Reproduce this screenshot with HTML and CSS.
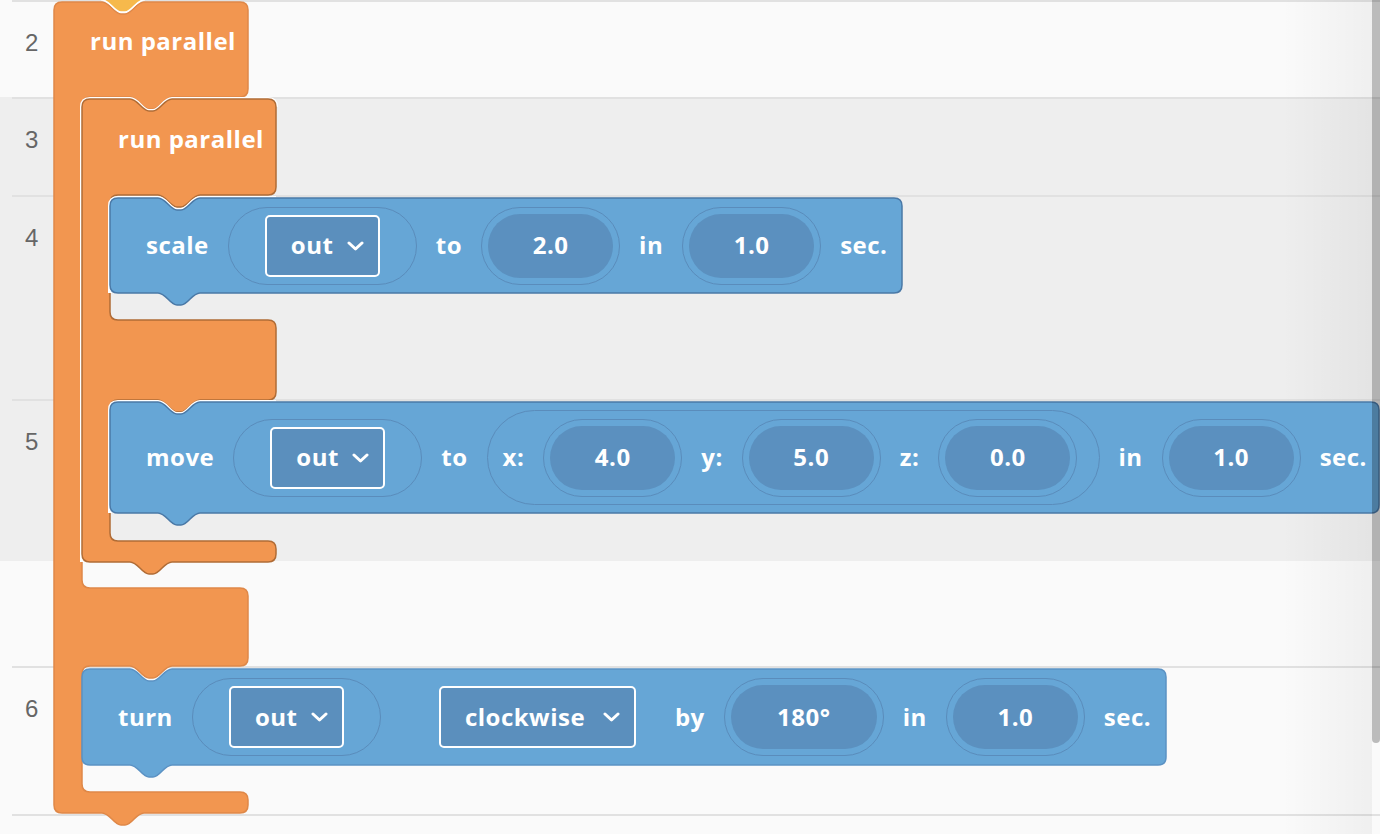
FILE: index.html
```html
<!DOCTYPE html>
<html lang="en">
<head>
    <meta charset="UTF-8" />
    <meta name="viewport" content="width=device-width, initial-scale=1.0" />
    <title>Blocks</title>
    <link rel="stylesheet" href="styles.css">
</head>

<body>
<div class="editor">
    <div class="rows">
        <div class="row row-2"><div class="row-in"><span class="ln">2</span></div></div>
        <div class="row row-3 sel"><div class="row-in"><span class="ln">3</span></div></div>
        <div class="row row-4 sel"><div class="row-in"><span class="ln">4</span></div></div>
        <div class="row row-5 sel-part"><div class="row-in"><span class="ln">5</span></div></div>
        <div class="row row-6"><div class="row-in"><span class="ln">6</span></div></div>
        <div class="row row-7"><div class="row-in"></div></div>
    </div>

    <div class="shade"></div>

    <div class="canvas">
        <!-- block shapes -->
        <svg class="shapes" width="1380" height="834" viewBox="0 0 1380 834">
            <path class="c-outer" d="M54,10 Q54,2 62,2 L102,2 C110,2 114,14 121,14 L125,14 C132,14 136,2 144,2 L240,2 Q248,2 248,10 L248,89 Q248,97 240,97 L172,97 C164,97 160,109 153,109 L149,109 C142,109 138,97 130,97 L90,97 Q82,97 82,105 L82,580 Q82,588 90,588 L240,588 Q248,588 248,596 L248,658 Q248,666 240,666 L172,666 C164,666 160,678 153,678 L149,678 C142,678 138,666 130,666 L90,666 Q82,666 82,674 L82,784 Q82,792 90,792 L240,792 Q248,792 248,800 L248,805 Q248,813 240,813 L144,813 C136,813 132,825 125,825 L121,825 C114,825 110,813 102,813 L62,813 Q54,813 54,805 Z"/>
            <path class="tab-yellow" d="M102,-4 H144 V0 C136,0 132,12 125,12 H121 C114,12 110,0 102,0 Z"/>

            <path class="hl" d="M82,562 L82,107 Q82,99 90,99 L130,99 C138,99 142,111 149,111 L153,111 C160,111 164,99 172,99 L268,99 Q276,99 276,107"/>
            <path class="c-inner" d="M82,107 Q82,99 90,99 L130,99 C138,99 142,111 149,111 L153,111 C160,111 164,99 172,99 L268,99 Q276,99 276,107 L276,187 Q276,195 268,195 L200,195 C192,195 188,207 181,207 L177,207 C170,207 166,195 158,195 L118,195 Q110,195 110,203 L110,312 Q110,320 118,320 L268,320 Q276,320 276,328 L276,392 Q276,400 268,400 L200,400 C192,400 188,412 181,412 L177,412 C170,412 166,400 158,400 L118,400 Q110,400 110,408 L110,533 Q110,541 118,541 L268,541 Q276,541 276,549 L276,554 Q276,562 268,562 L172,562 C164,562 160,574 153,574 L149,574 C142,574 138,562 130,562 L90,562 Q82,562 82,554 Z"/>

            <path class="hl" d="M110,293 L110,206 Q110,198 118,198 L158,198 C166,198 170,210 177,210 L181,210 C188,210 192,198 200,198 L276,198"/>
            <path class="b-sel" d="M110,206 Q110,198 118,198 L158,198 C166,198 170,210 177,210 L181,210 C188,210 192,198 200,198 L894,198 Q902,198 902,206 L902,285 Q902,293 894,293 L200,293 C192,293 188,305 181,305 L177,305 C170,305 166,293 158,293 L118,293 Q110,293 110,285 Z"/>

            <path class="hl" d="M110,513 L110,410 Q110,402 118,402 L158,402 C166,402 170,414 177,414 L181,414 C188,414 192,402 200,402 L276,402"/>
            <path class="b-sel" d="M110,410 Q110,402 118,402 L158,402 C166,402 170,414 177,414 L181,414 C188,414 192,402 200,402 L1371,402 Q1379,402 1379,410 L1379,505 Q1379,513 1371,513 L200,513 C192,513 188,525 181,525 L177,525 C170,525 166,513 158,513 L118,513 Q110,513 110,505 Z"/>

            <path class="b-plain" d="M82,677 Q82,669 90,669 L130,669 C138,669 142,681 149,681 L153,681 C160,681 164,669 172,669 L1158,669 Q1166,669 1166,677 L1166,757 Q1166,765 1158,765 L172,765 C164,765 160,777 153,777 L149,777 C142,777 138,765 130,765 L90,765 Q82,765 82,757 Z"/>
        </svg>

        <div class="blk outer-head"><span class="lbl">run parallel</span></div>
        <div class="blk inner-head"><span class="lbl">run parallel</span></div>

        <div class="blk scale-blk">
            <span class="lbl">scale</span>
            <div class="ring">
                <div class="dd"><span>out</span><svg class="chev" width="17" height="10" viewBox="0 0 17 10"><polyline points="2,2 8.5,8 15,2"/></svg></div>
            </div>
            <span class="lbl">to</span>
            <div class="num"><span class="val">2.0</span></div>
            <span class="lbl">in</span>
            <div class="num"><span class="val">1.0</span></div>
            <span class="lbl">sec.</span>
        </div>

        <div class="blk move-blk">
            <span class="lbl">move</span>
            <div class="ring">
                <div class="dd"><span>out</span><svg class="chev" width="17" height="10" viewBox="0 0 17 10"><polyline points="2,2 8.5,8 15,2"/></svg></div>
            </div>
            <span class="lbl">to</span>
            <div class="vec">
                <span class="lbl">x:</span>
                <div class="num"><span class="val">4.0</span></div>
                <span class="lbl">y:</span>
                <div class="num"><span class="val">5.0</span></div>
                <span class="lbl">z:</span>
                <div class="num"><span class="val">0.0</span></div>
            </div>
            <span class="lbl">in</span>
            <div class="num"><span class="val">1.0</span></div>
            <span class="lbl">sec.</span>
        </div>

        <div class="blk turn-blk">
            <span class="lbl">turn</span>
            <div class="ring">
                <div class="dd"><span>out</span><svg class="chev" width="17" height="10" viewBox="0 0 17 10"><polyline points="2,2 8.5,8 15,2"/></svg></div>
            </div>
            <div class="dd dd-wide"><span>clockwise</span><svg class="chev" width="17" height="10" viewBox="0 0 17 10"><polyline points="2,2 8.5,8 15,2"/></svg></div>
            <span class="lbl by">by</span>
            <div class="num num-wide"><span class="val">180°</span></div>
            <span class="lbl">in</span>
            <div class="num"><span class="val">1.0</span></div>
            <span class="lbl">sec.</span>
        </div>
    </div>

    <div class="scrollbar"></div>
</div>
</body>
</html>
```

FILE: styles.css
```css
body {
    margin: 0;
    background: #fafafa;
}
.editor {
    position: relative;
    width: 1380px;
    height: 834px;
    overflow: hidden;
    background: #fafafa;
}

/* line rows */
.row {
    background: #fafafa;
}
.row.sel {
    background: #eeeeee;
}
.row.sel-part {
    background: linear-gradient(#eeeeee 0 162px, #fafafa 162px);
}
.row-in {
    margin-left: 12px;
    height: 100%;
    box-sizing: border-box;
    border-top: 2px solid #e1e1e1;
    padding: 29px 0 0 13px;
}
.row-2 { height: 97px; }
.row-3 { height: 98px; }
.row-4 { height: 204px; }
.row-5 { height: 267px; }
.row-6 { height: 148px; }
.row-7 { height: 40px; }
.ln {
    display: block;
    font-family: "Liberation Sans", Arial, sans-serif;
    font-size: 24px;
    line-height: 24px;
    color: #666;
}

.shade {
    position: absolute;
    top: 0;
    right: 8px;
    width: 90px;
    height: 100%;
    background: linear-gradient(to right, rgba(0, 0, 0, 0), rgba(0, 0, 0, 0.045));
}

/* blocks */
.canvas {
    position: absolute;
    top: 0;
    left: 0;
    width: 1380px;
    height: 834px;
}
.shapes {
    position: absolute;
    top: 0;
    left: 0;
    overflow: visible;
}
.c-outer {
    fill: #f29650;
    stroke: #df8848;
    stroke-width: 1.5;
}
.c-inner {
    fill: #f29650;
    stroke: #b06c36;
    stroke-width: 1.5;
}
.tab-yellow {
    fill: #f6b94c;
    stroke: #fff;
    stroke-width: 1.5;
}
.hl {
    fill: none;
    stroke: #fff;
    stroke-width: 4;
}
.b-sel {
    fill: #66a6d6;
    stroke: #4a79a7;
    stroke-width: 1.5;
}
.b-plain {
    fill: #66a6d6;
    stroke: #5b92c4;
    stroke-width: 1.5;
}

.blk {
    position: absolute;
    box-sizing: border-box;
    display: flex;
    align-items: center;
    gap: 19px;
    padding-left: 36px;
    color: #fff;
    font-family: "Open Sans", Lato, sans-serif;
    font-weight: 700;
    font-size: 24px;
    letter-spacing: 0.5px;
    line-height: 1.2;
    white-space: nowrap;
}
.outer-head {
    left: 54px;
    top: 2px;
    height: 78px;
}
.inner-head {
    left: 82px;
    top: 99px;
    height: 80px;
}
.scale-blk {
    left: 110px;
    top: 198px;
    height: 95px;
}
.move-blk {
    left: 110px;
    top: 402px;
    height: 111px;
}
.turn-blk {
    left: 82px;
    top: 669px;
    height: 96px;
}

.ring {
    box-sizing: border-box;
    width: 189px;
    height: 78px;
    border: 1.5px solid #5a8cbb;
    border-radius: 40px;
    display: flex;
    align-items: center;
    justify-content: center;
}
.dd {
    box-sizing: border-box;
    width: 115px;
    height: 62px;
    border: 2px solid #fff;
    border-radius: 5px;
    background: #5b8fbd;
    display: flex;
    align-items: center;
    padding: 0 14px 0 24px;
}
.dd .chev {
    margin-left: auto;
}
.chev polyline {
    fill: none;
    stroke: #fff;
    stroke-width: 3;
    stroke-linecap: round;
    stroke-linejoin: round;
}
.dd-wide {
    width: 197px;
    margin-left: 39px;
}
.lbl.by {
    margin-left: 20px;
}

.num {
    box-sizing: border-box;
    width: 139px;
    height: 78px;
    padding: 6px;
    border: 1.5px solid #5a8cbb;
    border-radius: 40px;
    display: flex;
}
.num-wide {
    width: 160px;
}
.num .val {
    flex: 1;
    display: flex;
    align-items: center;
    justify-content: center;
    background: #5b90bf;
    border-radius: 32px;
}

.vec {
    box-sizing: border-box;
    height: 95px;
    width: 613px;
    border: 1.5px solid #5a8cbb;
    border-radius: 48px;
    display: flex;
    align-items: center;
    gap: 19px;
    padding-left: 15px;
}

.scrollbar {
    position: absolute;
    top: 0;
    right: 0;
    width: 8px;
    height: 743px;
    background: rgba(0, 0, 0, 0.25);
    border-radius: 0 0 4px 4px;
}
```
